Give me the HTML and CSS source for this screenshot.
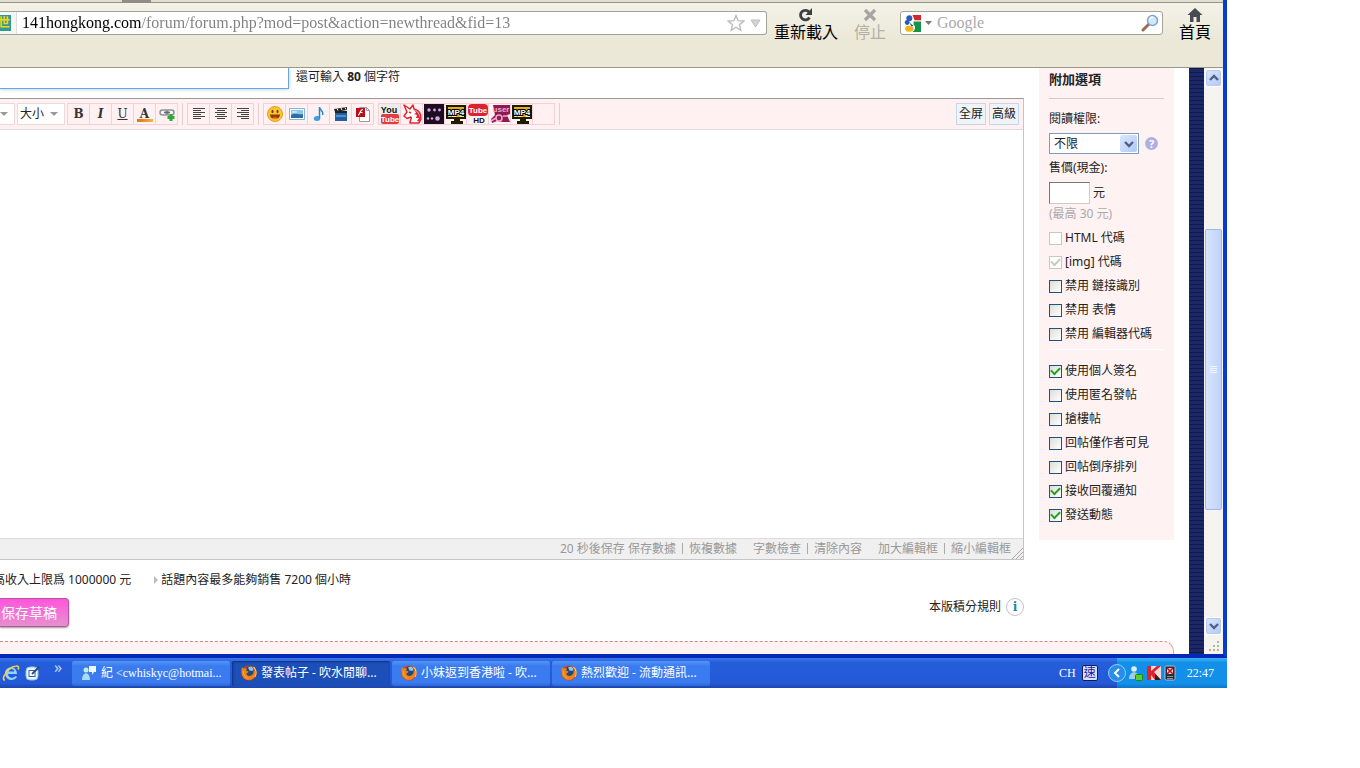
FILE: index.html
```html
<!DOCTYPE html>
<html lang="zh-Hant">
<head>
  <meta charset="UTF-8">
  <meta name="viewport" content="width=device-width, initial-scale=1.0">
  <title>發表帖子 - 吹水閒聊</title>
  <link rel="stylesheet" href="styles.css">
</head>
<body>
  <!-- shared icons -->
  <svg class="sprite" aria-hidden="true">
    <symbol id="chevron" viewBox="0 0 10 8"><path d="M1 2l4 4 4-4" fill="none" stroke="#4d6185" stroke-width="2.4"/></symbol>
    <symbol id="firefox" viewBox="0 0 16 16">
      <circle cx="8" cy="8" r="7.6" fill="#c9480c"/>
      <circle cx="8.500" cy="6.500" r="5" fill="#23477f"/>
      <path d="M7 2.500l3-1 2.500 2-1 2.500-3-.5z" fill="#8fc7ee"/>
      <path d="M1 2c.6 1 1 1.300 1.800 1.500C3.800 3 5 3 6 3.800L5 5.500l2.500 1c0 1.200-1.800 1.200-2 2.300 0 2 2.500 2.700 4.700 1.700 2.300-1 3-3.500 2-6.500 3 2.700 2.800 7.500-.5 9.800C8 16.500 2.300 14.500 1 10 .3 7 .2 4.500 1 2z" fill="#f0801a"/>
      <path d="M12.500 2c3 2.500 3.300 7 1.300 10" fill="none" stroke="#fbcb45" stroke-width="1.200"/>
      <path d="M2.500 6c-.5 3 1 6 4 7" fill="none" stroke="#fbb03a"/>
    </symbol>
    <symbol id="mp4" viewBox="0 0 20 20">
      <path d="M0 1h20v14h-6v2h3v3H5v-3h3v-2H0z" fill="#1f1a00"/>
      <path d="M2 3h16v10H2z" fill="#dcb416"/>
      <path d="M2 13l4-3 5 3zM13 13l5-4v4z" fill="#fff09a"/>
      <text x="10" y="11" text-anchor="middle" class="tag-text outlined">MP4</text>
    </symbol>
  </svg>

  <div class="screen">
    <div class="window">
      <div class="tabstrip"><span class="tab-edge"></span></div>
      <div class="navbar">
        <div class="address">
          <span class="favicon">世</span>
          <input class="url" type="text" aria-label="網址" value="141hongkong.com/forum/forum.php?mod=post&amp;action=newthread&amp;fid=13">
          <svg width="18" height="18" viewBox="0 0 18 18"><path d="M9 1.500l2.200 5.200 5.600.4-4.300 3.600 1.400 5.600L9 13.300l-4.900 3 1.400-5.600L1.200 7.100l5.600-.4z" fill="#fdfdfd" stroke="#b9b9b9" stroke-width="1.300"/></svg>
          <svg width="11" height="9" viewBox="0 0 11 9"><path d="M1 1h9L5.500 8z" fill="#d4d4d4" stroke="#bcbcbc"/></svg>
        </div>
        <button class="nav-btn reload" type="button">
          <svg width="16" height="14" viewBox="0 0 16 14"><path d="M11.500 9.500a4.800 4.800 0 1 1-.5-5.500" fill="none" stroke="#3a4046" stroke-width="2.800"/><path d="M14 0v7H7.500z" fill="#3a4046"/></svg>
          <span>重新載入</span>
        </button>
        <button class="nav-btn stop" type="button" disabled>
          <svg width="14" height="14" viewBox="0 0 14 14"><path d="M2 2l10 10M12 2L2 12" stroke="#a5a5a3" stroke-width="3.200"/></svg>
          <span>停止</span>
        </button>
        <div class="search">
          <svg width="17" height="17" viewBox="0 0 16 16"><path d="M8 0h8v5h-6z" fill="#d8252c"/><path d="M9 6h7v10H8c3-2 3-5 1-7z" fill="#159447"/><circle cx="5" cy="3" r="2.800" fill="#2b5bbd"/><circle cx="3" cy="7" r="2.300" fill="#2b5bbd"/><path d="M5 7l4 3-2 1z" fill="#2b5bbd"/><ellipse cx="5" cy="13" rx="4" ry="2.800" fill="#f1b51c"/></svg>
          <svg width="7" height="4" viewBox="0 0 7 4"><path d="M0 0h7L3.500 4z" fill="#777"/></svg>
          <input type="text" aria-label="搜尋" placeholder="Google">
          <svg width="18" height="18" viewBox="0 0 18 18"><path d="M2 16l6-6" stroke="#9c6b55" stroke-width="3" stroke-linecap="round"/><circle cx="11.500" cy="6.500" r="5" fill="#cfe8fb" stroke="#7fa3cf" stroke-width="1.500"/><path d="M9 6c0-2 1.500-3 3-3" stroke="#fff" stroke-width="1.500" fill="none"/></svg>
        </div>
        <button class="nav-btn home" type="button">
          <svg width="16" height="14" viewBox="0 0 16 14"><path d="M8 0l7.500 7H13v7H9.500V9h-3v5H3V7H.5z" fill="#474c52"/></svg>
          <span>首頁</span>
        </button>
      </div>

      <div class="viewport">
        <div class="page">
          <div class="columns">
            <main class="main">
              <div class="subject">
                <input class="subject-input" type="text" aria-label="標題">
                <span>還可輸入 <b>80</b> 個字符</span>
              </div>

              <div class="editor">
                <div class="toolbar">
                  <button class="drop font-drop" type="button" aria-label="字體"><i class="caret"></i></button>
                  <button class="drop size-drop" type="button">大小<i class="caret"></i></button>
                  <div class="tools">
                    <button type="button"><b>B</b></button>
                    <button type="button"><b><em>I</em></b></button>
                    <button type="button"><u>U</u></button>
                    <button type="button" class="color-btn">A</button>
                    <button type="button" aria-label="鏈接"><svg width="16" height="16" viewBox="0 0 16 16"><rect x="1" y="4" width="8" height="5" rx="2.500" fill="none" stroke="#8c9298" stroke-width="1.500"/><rect x="7" y="4" width="8" height="5" rx="2.500" fill="none" stroke="#8c9298" stroke-width="1.500"/><path d="M5 6.500h6" stroke="#646a70" stroke-width="1.500"/><path d="M12 8v7M8.500 11.500h7" stroke="#2bab35" stroke-width="3"/></svg></button>
                  </div>
                  <span class="sep"></span>
                  <div class="tools">
                    <button type="button" aria-label="左對齊"><svg width="14" height="12" viewBox="0 0 14 12"><path d="M1 .5h12M1 2.500h8M1 4.500h12M1 6.500h8M1 8.500h12M1 10.500h8" stroke="#444"/></svg></button>
                    <button type="button" aria-label="居中"><svg width="14" height="12" viewBox="0 0 14 12"><path d="M1 .5h12M3 2.500h8M1 4.500h12M3 6.500h8M1 8.500h12M3 10.500h8" stroke="#444"/></svg></button>
                    <button type="button" aria-label="右對齊"><svg width="14" height="12" viewBox="0 0 14 12"><path d="M1 .5h12M5 2.500h8M1 4.500h12M5 6.500h8M1 8.500h12M5 10.500h8" stroke="#444"/></svg></button>
                  </div>
                  <span class="sep"></span>
                  <div class="tools">
                    <button type="button" aria-label="表情"><svg width="16" height="16" viewBox="0 0 16 16"><circle cx="8" cy="8" r="7.500" fill="#fcc52c" stroke="#e79a1c"/><ellipse cx="5.500" cy="5.500" rx="1" ry="1.800" fill="#6a3b10"/><ellipse cx="10.500" cy="5.500" rx="1" ry="1.800" fill="#6a3b10"/><path d="M3 8.500h10c0 6-10 6-10 0z" fill="#8d3b12"/><path d="M5 12c2-1 4-1 6 0-2 1.500-4 1.500-6 0z" fill="#ef7d2e"/></svg></button>
                    <button type="button" aria-label="圖片"><svg width="16" height="14" viewBox="0 0 16 14"><path d="M.5 1.500h15v11H.5z" fill="#fff" stroke="#83b5da"/><path d="M2 3h12v8H2z" fill="#8cc4ee"/><path d="M2 8c4-3 7 0 12-1v4H2z" fill="#2f6f9f"/><path d="M3 5h5" stroke="#fff"/></svg></button>
                    <button type="button" aria-label="音樂"><svg width="12" height="16" viewBox="0 0 12 16"><ellipse cx="4" cy="12.500" rx="3.200" ry="2.500" fill="#3e9ee6"/><path d="M6.500 12.500V1c0 3 4.500 3.500 3 8" fill="none" stroke="#2a84cf" stroke-width="1.500"/></svg></button>
                    <button type="button" aria-label="視頻"><svg width="14" height="14" viewBox="0 0 14 14"><path d="M1 5h12v9H1z" fill="#235f9f"/><path d="M2 8h10v2H2z" fill="#4b93d8"/><path d="M0 2l13-2v3L1 5z" fill="#222"/><path d="M1 4h12v2H1z" fill="#222"/><path d="M3 1.500l1 2M7 1l1 2M11 .5l1 2" stroke="#fff"/></svg></button>
                    <button type="button" aria-label="Flash"><svg width="16" height="16" viewBox="0 0 16 16"><path d="M4.500 1.500h7l3 3v11h-10z" fill="#fff" stroke="#9b9b9b"/><path d="M11.500 1.500v3h3" fill="none" stroke="#9b9b9b"/><path d="M1 2h9v9H1z" fill="#b80f18"/><path d="M8 3.500c-2 0-2 1-3 3s-1 2.500-2 2.500M4.500 6.500h3" stroke="#fff" stroke-width="1.200" fill="none"/></svg></button>
                  </div>
                  <div class="tools custom">
                    <button type="button" aria-label="YouTube"><svg width="20" height="20" viewBox="0 0 20 20"><path d="M0 0h20v20H0z" fill="#ececec"/><rect x="1" y="10" width="18" height="10" rx="2" fill="#e23c3c"/><text x="9" y="9" text-anchor="middle" class="tag-text tall">You</text><text x="10" y="18" text-anchor="middle" class="tag-text white">Tube</text></svg></button>
                    <button type="button" aria-label="獨角獸"><svg width="20" height="20" viewBox="0 0 20 20"><path d="M2 1l6 4 3-4 1 4c5 1 7 5 7 10l-2 4H8c0-3 2-4 1-6l-4 1.500-3-2.500 3-4z" fill="#fff" stroke="#e02733" stroke-width="1.500" stroke-linejoin="round"/><path d="M11 6c2 1 3 2 3 3l-2 1 3 1-1 3 3 0-2 3 3 1-2 1h2c1-6-1-12-7-13z" fill="#e02733"/><path d="M7 8l2 1" stroke="#e02733" stroke-width="1.500"/></svg></button>
                    <button type="button" aria-label="影片"><svg width="20" height="20" viewBox="0 0 20 20"><path d="M0 0h20v20H0z" fill="#1c0d23"/><g fill="#d9a8da"><circle cx="5" cy="6" r="1.700"/><circle cx="10.500" cy="6" r="1.400"/><circle cx="15.500" cy="6" r="1.400"/><circle cx="4" cy="14.500" r="1.200"/><circle cx="8" cy="14.500" r="1.200"/><circle cx="13.500" cy="14.500" r="2.300"/></g></svg></button>
                    <button type="button" aria-label="MP4"><svg width="20" height="20"><use href="#mp4"/></svg></button>
                    <button type="button" aria-label="Tube HD"><svg width="20" height="20" viewBox="0 0 20 20"><rect width="20" height="12" rx="4" fill="#db2330"/><text x="10" y="9" text-anchor="middle" class="tag-text white">Tube</text><text x="11" y="19" text-anchor="middle" class="tag-text">HD</text></svg></button>
                    <button type="button" aria-label="user"><svg width="20" height="20" viewBox="0 0 20 20"><path d="M3 1h17v9l-3 1 3 7h-7l-6-1-5 2-1-4 4-4z" fill="#8d1a50"/><text x="11" y="8" text-anchor="middle" class="tag-text pink">user</text><circle cx="9" cy="14" r="3" fill="none" stroke="#f2a9c9" stroke-width="1.500"/><path d="M13 12h5M1 17l5-3" stroke="#f2a9c9" stroke-width="1.500"/></svg></button>
                    <button type="button" aria-label="MP4"><svg width="20" height="20"><use href="#mp4"/></svg></button>
                    <button type="button" aria-label="自訂"></button>
                  </div>
                  <span class="sep"></span>
                  <div class="modes">
                    <button type="button">全屏</button>
                    <button type="button">高級</button>
                  </div>
                </div>
                <textarea class="editor-body" aria-label="內容"></textarea>
                <div class="statusbar">
                  <span>20 秒後保存 <a href="#">保存數據</a><i class="pipe"></i><a href="#">恢複數據</a></span>
                  <span><a href="#">字數檢查</a><i class="pipe"></i><a href="#">清除內容</a></span>
                  <span><a href="#">加大編輯框</a><i class="pipe"></i><a href="#">縮小編輯框</a></span>
                  <svg width="11" height="11" viewBox="0 0 11 11"><path d="M0 11L11 0M4 11l7-7M8 11l3-3" stroke="#aaa"/></svg>
                </div>
              </div>

              <div class="notes">
                <span>高收入上限爲 1000000 元</span>
                <span class="note-arrow">話題內容最多能夠銷售 7200 個小時</span>
              </div>
              <div class="actions">
                <button class="draft" type="button">保存草稿</button>
                <a class="rules" href="#">本版積分規則 <span class="info">i</span></a>
              </div>
            </main>

            <aside class="options">
              <h2>附加選項</h2>
              <label for="readperm">閱讀權限:</label>
              <div class="perm-row">
                <div class="select">
                  <select id="readperm"><option>不限</option></select>
                  <span class="select-btn"><svg width="10" height="8"><use href="#chevron"/></svg></span>
                </div>
                <span class="help">?</span>
              </div>
              <label for="price">售價(現金):</label>
              <div class="price-row"><input id="price" type="text"> 元</div>
              <p class="hint">(最高 30 元)</p>
              <div class="checks">
                <label class="check"><input type="checkbox" disabled>HTML 代碼</label>
                <label class="check"><input type="checkbox" checked disabled>[img] 代碼</label>
                <label class="check"><input type="checkbox">禁用 鏈接識別</label>
                <label class="check"><input type="checkbox">禁用 表情</label>
                <label class="check"><input type="checkbox">禁用 編輯器代碼</label>
              </div>
              <div class="checks more">
                <label class="check"><input type="checkbox" checked>使用個人簽名</label>
                <label class="check"><input type="checkbox">使用匿名發帖</label>
                <label class="check"><input type="checkbox">搶樓帖</label>
                <label class="check"><input type="checkbox">回帖僅作者可見</label>
                <label class="check"><input type="checkbox">回帖倒序排列</label>
                <label class="check"><input type="checkbox" checked>接收回覆通知</label>
                <label class="check"><input type="checkbox" checked>發送動態</label>
              </div>
            </aside>
          </div>
          <div class="bottom-box"></div>
        </div>

        <div class="page-bg"></div>
        <div class="scrollbar">
          <button class="scroll-btn up" type="button" aria-label="向上"><svg width="10" height="8"><use href="#chevron"/></svg></button>
          <div class="track"><div class="thumb"><i></i><i></i><i></i><i></i></div></div>
          <button class="scroll-btn" type="button" aria-label="向下"><svg width="10" height="8"><use href="#chevron"/></svg></button>
          <svg class="grip" width="12" height="12" viewBox="0 0 12 12"><path d="M9 0h2v2H9zM5 4h2v2H5zM9 4h2v2H9zM1 8h2v2H1zM5 8h2v2H5zM9 8h2v2H9z" fill="#b5b19d"/></svg>
        </div>
      </div>
    </div>

    <div class="taskbar">
      <div class="quick">
        <button type="button" aria-label="Internet Explorer"><svg width="18" height="18" viewBox="0 0 18 18"><path d="M15 10H6c0 4 5 5 7.500 2l1.500 1c-3 5-12 4-12-4 0-7 12-8 12 1zM6.500 7.500h5.800c0-3.500-5.300-3.500-5.800 0z" fill="#8fd3fa"/><path d="M3 16C-2 16 6 3 14 2c3-.5 3 2 2 3.500" fill="none" stroke="#f7cf46" stroke-width="1.600"/></svg></button>
        <button type="button" aria-label="顯示桌面"><svg width="16" height="16" viewBox="0 0 16 16"><rect x="1" y="2" width="12" height="13" rx="4" fill="#eaf4fc" stroke="#98bfe4"/><rect x="4" y="5.500" width="6" height="6" fill="#fff" stroke="#2e67a8"/><path d="M7 9l7-7" stroke="#2c4a77" stroke-width="1.800"/></svg></button>
        <span class="more-icons">»</span>
      </div>
      <button class="task" type="button"><svg width="16" height="16" viewBox="0 0 16 16"><circle cx="5" cy="5" r="2.500" fill="#c5ecdf"/><path d="M1 15c0-9 8-9 8 0z" fill="#a9dcec"/><path d="M8 1h7v6h-2l-2 3V7H8z" fill="#eef8ff"/></svg><span class="latin">紀 &lt;cwhiskyc@hotmai...</span></button>
      <button class="task active" type="button"><svg width="16" height="16"><use href="#firefox"/></svg><span>發表帖子 - 吹水閒聊...</span></button>
      <button class="task" type="button"><svg width="16" height="16"><use href="#firefox"/></svg><span>小妹返到香港啦 - 吹...</span></button>
      <button class="task" type="button"><svg width="16" height="16"><use href="#firefox"/></svg><span>熱烈歡迎 - 流動通訊...</span></button>
      <div class="lang">CH <span class="ime">速</span></div>
      <div class="tray">
        <button class="tray-toggle" type="button" aria-label="隱藏圖示"><svg width="18" height="18" viewBox="0 0 18 18"><circle cx="9" cy="9" r="8.500" fill="#2a8ceb" stroke="#8fd0fa"/><path d="M11 5L7 9l4 4" fill="none" stroke="#fff" stroke-width="2"/></svg></button>
        <svg width="16" height="16" viewBox="0 0 16 16"><circle cx="6" cy="4" r="2.800" fill="#dfeef2"/><path d="M1 14c0-9 10-9 10 0z" fill="#a8cdd9"/><rect x="7.500" y="9.500" width="7" height="6" rx="1" fill="#4fd22c" stroke="#238316"/></svg>
        <svg width="16" height="16" viewBox="0 0 16 16"><path d="M1 1h14v14H1z" fill="#f3dada"/><path d="M1 1h4v5l6-5h4L8 7l7 8H9L5 10v5H1z" fill="#d9252b"/><path d="M9 9l6 6h-6z" fill="#222"/></svg>
        <svg width="12" height="16" viewBox="0 0 12 16"><rect x="1" y="1" width="10" height="14" rx="1.500" fill="#272b39" stroke="#aebdcc"/><path d="M3 3h6v6H3z" fill="#f3d0d0"/><path d="M3 3l6 6M9 3L3 9" stroke="#c3141c" stroke-width="1.600"/><path d="M3 11.500h6M3 13.500h6" stroke="#8391a3"/></svg>
        <time>22:47</time>
      </div>
    </div>
  </div>
</body>
</html>
```
FILE: styles.css
```css
* {
  box-sizing: border-box;
}
body {
  margin: 0;
  padding: 0 133px 80px 0;
  background: #fff;
  color: #222;
  font: 12px/16px "Noto Sans", "Noto Sans CJK TC", sans-serif;
}
button, input, select, textarea {
  margin: 0;
  padding: 0;
  font: inherit;
  color: inherit;
  outline: 0;
}
a {
  color: inherit;
  text-decoration: none;
}
svg {
  display: block;
  flex: none;
}
.sprite {
  display: none;
}
.screen {
  display: flex;
  flex-direction: column;
  min-height: calc(100vh - 80px);
  overflow: hidden;
}
.window {
  flex: 1;
  display: flex;
  flex-direction: column;
  border-right: 4px solid #0a3bd0;
  border-bottom: 4px solid #0528b8;
}

/* browser chrome */
.tabstrip {
  height: 3px;
  padding-left: 122px;
  background: #e3dfcf;
  border-bottom: 1px solid #96948a;
}
.tab-edge {
  display: block;
  width: 29px;
  height: 3px;
  background: #8f8d85;
}
.navbar {
  display: flex;
  align-items: flex-start;
  height: 65px;
  padding: 4px 12px 0 0;
  background: linear-gradient(#f4f2e8, #ebe8d7 60%);
  border-bottom: 1px solid #9a9888;
}
.address, .search {
  display: flex;
  align-items: center;
  height: 24px;
  margin-top: 4px;
  background: #fff;
  border: 1px solid #a5a399;
  border-radius: 3px;
}
.address {
  flex: 1;
  gap: 5px;
  padding-right: 5px;
  border-left: 0;
  border-radius: 0 3px 3px 0;
}
.favicon {
  width: 17px;
  height: 22px;
  padding-top: 3px;
  border-right: 1px solid #ddd;
  background: linear-gradient(#2d9a95, #2d9a95) 0 3px / 11px 16px no-repeat #f6f6f3;
  color: #f5d21b;
  font-size: 12px;
  font-weight: bold;
  text-indent: -2px;
  overflow: hidden;
}
.url, .search input {
  flex: 1;
  min-width: 0;
  height: 20px;
  border: 0;
  font: 16px/20px "Liberation Serif", serif;
}
/* host part dark, path grey */
.url {
  background: linear-gradient(90deg, #000 119px, #808080 119px);
  -webkit-background-clip: text;
  background-clip: text;
  color: transparent;
}
.search {
  width: 263px;
  gap: 4px;
  padding: 0 3px;
}
.search input {
  background: none;
  padding-left: 1px;
}
.search input::placeholder {
  color: #aaa;
}
.nav-btn {
  display: flex;
  flex-direction: column;
  align-items: center;
  border: 0;
  background: none;
  color: #000;
  font-size: 16px;
  line-height: 20px;
}
.nav-btn svg {
  margin-top: 1px;
}
.reload {
  margin-left: 7px;
}
.stop {
  margin: 0 14px 0 16px;
  color: #b3b0a4;
}
.home {
  margin-left: 16px;
}

/* page */
.viewport {
  flex: 1;
  display: flex;
}
.page {
  flex: 1;
  display: flex;
  flex-direction: column;
  min-width: 0;
  padding-right: 15px;
}
.page-bg {
  width: 15px;
  background: repeating-linear-gradient(#101a50 0 1px, #1a2868 1px 4px);
}
.columns {
  flex: 1;
  display: flex;
  align-items: flex-start;
  gap: 15px;
}
.main {
  flex: 1;
  align-self: stretch;
  display: flex;
  flex-direction: column;
  min-width: 0;
  padding-bottom: 14px;
  overflow: hidden;
}
.subject {
  display: flex;
  align-items: flex-start;
  gap: 7px;
  height: 30px;
}
.subject span {
  padding-top: 1px;
}
.subject-input {
  width: 289px;
  height: 21px;
  padding: 0 8px;
  border: 1px solid #6ba5dc;
  border-width: 0 1px 1px 0;
  box-shadow: 0 0 4px #9cc8f0;
}
.editor {
  flex: 1;
  display: flex;
  flex-direction: column;
  border: 1px solid #c5c5c5;
  border-top-color: #999;
  border-left: 0;
}
.toolbar {
  display: flex;
  align-items: center;
  height: 31px;
  padding-right: 4px;
  background: #fff0f2;
  border-bottom: 1px solid #ddd;
}
.drop {
  display: flex;
  align-items: center;
  justify-content: space-between;
  height: 22px;
  margin-right: 2px;
  padding: 0 6px 0 2px;
  border: 1px solid #eadada;
  background: #fff;
}
.font-drop {
  width: 15px;
  padding-left: 0;
  border-left: 0;
}
.size-drop {
  width: 48px;
}
.caret {
  flex: none;
  border: 4px solid transparent;
  border-top-color: #999;
  border-bottom: 0;
}
.tools {
  display: flex;
  border-left: 1px solid #f5cfd8;
}
.tools.custom {
  margin-left: 4px;
}
.tools button {
  display: flex;
  align-items: center;
  justify-content: center;
  width: 22px;
  height: 22px;
  border: 1px solid #f5cfd8;
  border-left: 0;
  background: none;
  color: #333;
  font: 12px/16px "DejaVu Serif", serif;
}
.tools .color-btn {
  background: linear-gradient(90deg, #d9730f, #f3b24a) center bottom 2px / 16px 3px no-repeat;
  font-weight: bold;
}
.sep {
  width: 1px;
  height: 22px;
  margin: 0 4px;
  background: #e3cfd3;
}
.modes {
  display: flex;
  gap: 3px;
  margin-left: auto;
}
.modes button {
  width: 30px;
  height: 22px;
  border: 1px solid #c5d8e8;
  background: #f0f4f8;
}
.tag-text {
  font: bold 8px "Liberation Sans", sans-serif;
  fill: #111;
}
.tag-text.tall {
  font-size: 9px;
}
.tag-text.white {
  fill: #fff;
}
.tag-text.pink {
  fill: #f2a9c9;
}
.tag-text.outlined {
  fill: #fff;
  stroke: #000;
  stroke-width: 2px;
  paint-order: stroke;
}
.editor-body {
  flex: 1;
  width: 100%;
  padding: 8px;
  border: 0;
  background: #fff;
  resize: none;
}
.statusbar {
  display: flex;
  justify-content: flex-end;
  gap: 16px;
  height: 21px;
  padding-top: 2px;
  background: #f0f0f0;
  border-top: 1px solid #ddd;
  color: #999;
}
.statusbar svg {
  align-self: flex-end;
  margin-left: -15px;
}
.pipe {
  display: inline-block;
  width: 1px;
  height: 11px;
  margin: 0 6px;
  background: #aaa;
  vertical-align: -1px;
}
.notes {
  display: flex;
  gap: 23px;
  height: 38px;
  margin-left: -7px;
  padding-top: 12px;
}
.note-arrow::before {
  content: "";
  display: inline-block;
  margin-right: 3px;
  border: 4px solid transparent;
  border-left-color: #bbb;
  border-right: 0;
}
.actions {
  display: flex;
  justify-content: space-between;
  align-items: flex-start;
}
.draft {
  height: 29px;
  padding: 0 11px 0 1px;
  border: 1px solid #b05a9c;
  border-left: 0;
  border-radius: 0 4px 4px 0;
  background: linear-gradient(#ff55dc, #e78fd0);
  box-shadow: 0 1px 2px #999;
  color: #fff;
  font-size: 14px;
}
.rules {
  display: flex;
  align-items: center;
  gap: 5px;
}
.info {
  width: 18px;
  height: 18px;
  border: 1px solid #c8bfbf;
  border-radius: 50%;
  color: #16899a;
  font: bold 12px/16px "DejaVu Serif", serif;
  text-align: center;
}
.bottom-box {
  height: 13px;
  background: #fff2f2;
  border-top: 1px dashed #d08a8a;
  border-right: 1px solid #e0a0a0;
  border-radius: 0 10px 0 0;
}

/* sidebar */
.options {
  width: 135px;
  padding: 3px 10px 13px;
  background: #fff2f2;
}
.options h2 {
  margin: 0 0 12px;
  padding-bottom: 11px;
  border-bottom: 1px solid #d8c9c9;
  font-size: 13px;
  line-height: 16px;
}
.options > label {
  display: block;
}
.perm-row {
  display: flex;
  align-items: center;
  gap: 6px;
  margin: 6px 0;
}
.select {
  display: grid;
  align-items: center;
  width: 90px;
}
.select select {
  grid-area: 1 / 1;
  width: 100%;
  height: 21px;
  padding-left: 4px;
  border: 1px solid #7f9db9;
  border-radius: 0;
  background: #fff;
  appearance: none;
}
.select-btn {
  grid-area: 1 / 1;
  justify-self: end;
  display: flex;
  align-items: center;
  justify-content: center;
  width: 17px;
  height: 17px;
  margin-right: 2px;
  border-radius: 2px;
  background: linear-gradient(135deg, #dbe6fe, #b3c8f6);
  pointer-events: none;
}
.help {
  width: 13px;
  height: 13px;
  border-radius: 50%;
  background: #aeb0e0;
  color: #fff;
  font-size: 11px;
  font-weight: bold;
  line-height: 13px;
  text-align: center;
}
.price-row {
  margin-top: 6px;
  line-height: 22px;
}
.price-row input {
  width: 41px;
  height: 22px;
  border: 1px solid #ccc;
  border-top-color: #777;
  border-left-color: #777;
  background: #fff;
  vertical-align: top;
}
.hint {
  margin: 2px 0 4px;
  color: #aaa;
}
.checks {
  padding-bottom: 3px;
}
.checks.more {
  padding: 9px 0 0;
  border-top: 1px solid #fff;
}
.check {
  display: flex;
  align-items: center;
  gap: 3px;
  height: 24px;
  white-space: nowrap;
}
.check input {
  display: grid;
  place-items: center;
  flex: none;
  width: 13px;
  height: 13px;
  border: 1px solid #1c5180;
  background: linear-gradient(135deg, #dcdcd7, #fff);
  appearance: none;
}
.check input:checked::before {
  content: "";
  width: 7px;
  height: 4px;
  margin-top: -2px;
  border: solid #21a121;
  border-width: 0 0 2px 2px;
  transform: rotate(-45deg);
}
.check input:disabled {
  border-color: #cac8bb;
  background: #fff;
}
.check input:disabled::before {
  border-color: #cac8bb;
}

/* scrollbar */
.scrollbar {
  display: flex;
  flex-direction: column;
  align-items: center;
  width: 19px;
  padding: 1px 0;
  background: #f5f4ee;
}
.scroll-btn {
  display: flex;
  align-items: center;
  justify-content: center;
  width: 17px;
  height: 18px;
  border: 1px solid #fff;
  border-radius: 3px;
  background: linear-gradient(135deg, #dbe6fe, #b3c8f6);
  box-shadow: inset 0 0 0 1px #b5c9f3;
}
.scroll-btn.up svg {
  transform: rotate(180deg);
}
.track {
  flex: 1;
  display: grid;
  grid-template-rows: 142fr 281fr 107fr;
  width: 17px;
}
.thumb {
  grid-row: 2;
  display: flex;
  flex-direction: column;
  align-items: center;
  justify-content: center;
  gap: 1px;
  border: 1px solid #9db8ee;
  border-radius: 2px;
  background: linear-gradient(90deg, #d7e4fe, #bfd3fb);
}
.thumb i {
  width: 7px;
  height: 1px;
  background: #f0f5ff;
}
.grip {
  margin-top: 6px;
}

/* taskbar */
.taskbar {
  display: flex;
  align-items: center;
  gap: 2px;
  height: 30px;
  background: linear-gradient(#3a78ea, #245edb 15%, #2459d6 85%, #1c45ab);
  color: #fff;
}
.quick {
  display: flex;
  align-items: center;
  gap: 5px;
  width: 70px;
  padding-left: 2px;
}
.quick button, .tray-toggle {
  border: 0;
  background: none;
}
.more-icons {
  margin: -12px 0 0 8px;
  color: #c5d8fa;
  font-size: 16px;
}
.task {
  display: flex;
  align-items: center;
  gap: 4px;
  flex: 0 1 158px;
  min-width: 0;
  height: 25px;
  padding: 0 9px;
  border: 0;
  border-radius: 2px;
  background: linear-gradient(#5593f5, #3a7cf0 20%, #3a7cf0 85%, #2f69d6);
  white-space: nowrap;
  overflow: hidden;
}
.task.active {
  background: #1d4fb8;
  box-shadow: inset 1px 1px 2px #10327c;
}
.latin, .lang, .tray time {
  font-family: "Liberation Serif", "Noto Sans CJK TC", serif;
}
.lang {
  display: flex;
  align-items: center;
  gap: 6px;
  margin-left: auto;
}
.ime {
  width: 16px;
  height: 16px;
  border: 1px solid #111a60;
  border-radius: 2px;
  background: #d9e0f8;
  color: #1a22a0;
  line-height: 14px;
  text-align: center;
}
.tray {
  display: flex;
  align-items: center;
  gap: 2px;
  align-self: stretch;
  margin-left: 17px;
  padding-right: 13px;
  background: linear-gradient(#3fb4f5, #1290e9 15%, #1290e9 85%, #0d75c9);
}
.tray-toggle {
  margin-left: -9px;
}
.tray time {
  margin-left: 9px;
}
```
